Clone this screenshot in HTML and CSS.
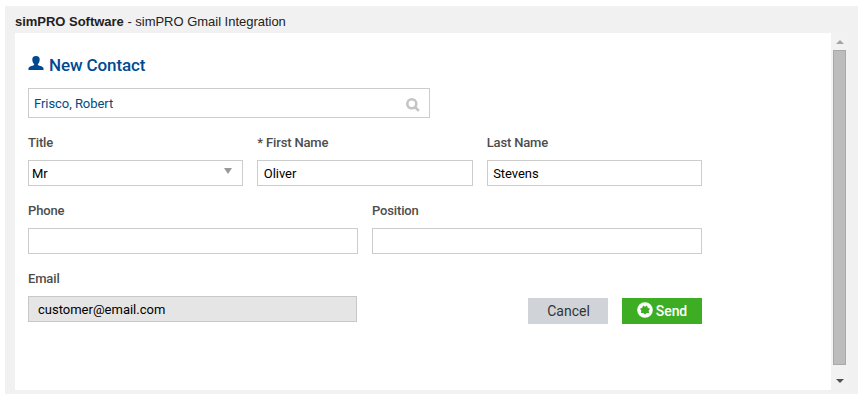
FILE: index.html
```html
<!DOCTYPE html>
<html lang="en">
<head>
<meta charset="utf-8">
<title>simPRO Gmail Integration</title>
<link rel="stylesheet" href="styles.css">
</head>
<body>
<main class="gadget">
  <header class="gadget-title"><span><b>simPRO Software</b> - simPRO Gmail Integration</span></header>
  <div class="viewport">
    <form class="contact">
      <h1 class="heading">
        <svg class="user" viewBox="0 0 16 14"><path d="M8 0C5.4 0 4.1 1.4 4.3 3.8C4.4 5.7 5 7 6.1 8V9C4.5 10 1.8 10.2.8 11.4Q.4 12 .4 14H15.6Q15.6 12 15.2 11.4C14.2 10.2 11.5 10 9.9 9V8C11 7 11.6 5.7 11.7 3.8C11.9 1.4 10.6 0 8 0Z"/></svg>
        <span>New Contact</span>
      </h1>
      <div class="box search"><span>Frisco, Robert</span>
        <svg class="glass" viewBox="0 0 14 14"><circle cx="5.8" cy="5.8" r="4.5"/><path d="M9 9L12.8 12.8"/></svg>
      </div>
      <div class="row three">
        <div class="field"><label>Title</label><div class="box select"><span>Mr</span><svg class="caret" viewBox="0 0 8 6"><path d="M0 0H8L4 6Z"/></svg></div></div>
        <div class="field"><label>* First Name</label><div class="box">Oliver</div></div>
        <div class="field"><label>Last Name</label><div class="box">Stevens</div></div>
      </div>
      <div class="row two">
        <div class="field"><label>Phone</label><div class="box"></div></div>
        <div class="field"><label>Position</label><div class="box"></div></div>
      </div>
      <div class="row last">
        <div class="field email"><label>Email</label><div class="box disabled">customer@email.com</div></div>
        <div class="actions">
          <div class="button cancel">Cancel</div>
          <div class="button send">
            <svg class="badge" viewBox="0 0 16 16"><circle class="disc" cx="8" cy="8" r="7.8"/><path class="gear" d="M8 4.7L10 3.5L10.7 5.8L13 6.7L11.7 8.5L12 10.9L9.7 11L8 12.5L6.3 11L4 10.9L4.3 8.5L3 6.7L5.3 5.8L6 3.5Z"/></svg>
            <span>Send</span>
          </div>
        </div>
      </div>
    </form>
    <div class="scrollbar">
      <svg class="arrow up" viewBox="0 0 8 4"><path d="M0 4L4 0L8 4Z"/></svg>
      <div class="thumb"></div>
      <svg class="arrow down" viewBox="0 0 8 4"><path d="M0 0H8L4 4Z"/></svg>
    </div>
  </div>
</main>
</body>
</html>
```
FILE: styles.css
```css
* { box-sizing: border-box; }
body { margin: 0; background: #fff; font: 13px/15px Roboto, sans-serif; color: #000; }
svg { display: block; flex: none; }
.gadget { width: 853px; height: 388px; margin: 6px 0 0 5px; padding: 0 10px 4px; background: #f1f1f1; }
.gadget-title { height: 27px; padding-top: 8px; font: 13px/15px "Liberation Sans", Arial, sans-serif; letter-spacing: -0.02px; color: #222; white-space: nowrap; }
.viewport { display: flex; width: 833px; height: 357px; background: #fff; }
.contact { width: 816px; padding: 22px 129px 0 13px; }
.heading { display: flex; gap: 5px; margin: 0; height: 33px; font-size: 17px; line-height: 21px; font-weight: 500; letter-spacing: -0.12px; color: #004990; }
.user { width: 16px; height: 14px; margin-top: 1px; fill: #004990; }
.box { display: flex; align-items: center; height: 26px; padding: 1px 6px 0 5.5px; border: 1px solid #ccc; background: #fff; letter-spacing: -0.05px; }
.search { justify-content: space-between; width: 402px; height: 30px; padding: 1px 9px 0 5px; color: #004b85; }
.glass { width: 14px; height: 14px; margin-top: 2px; fill: none; stroke: #c4c4c4; stroke-width: 2.6; }
.row { display: grid; column-gap: 14px; height: 68px; }
.three { grid-template-columns: repeat(3, 1fr); margin-top: 17px; }
.two { grid-template-columns: 1fr 1fr; }
.last { grid-template-columns: 329px 174px; justify-content: space-between; }
label { display: block; height: 25px; line-height: 16px; font-weight: 500; letter-spacing: -0.15px; color: #4d4d4d; }
.select { justify-content: space-between; padding: 1px 10px 0 3px; }
.caret { width: 8px; height: 6px; margin-bottom: 5px; fill: #999; }
.disabled { padding-left: 9px; background: #e5e5e5; border-color: #c8c8c8; letter-spacing: 0; }
.actions { display: flex; gap: 14px; padding-top: 27px; }
.button { display: flex; align-items: center; justify-content: center; width: 80px; height: 26px; padding-top: 1px; font-size: 14px; color: #333; }
.cancel { padding-left: 1px; background: #d0d4d8; }
.send { gap: 3px; background: #3dae23; color: #fff; font-weight: 500; letter-spacing: -0.1px; }
.badge { width: 16px; height: 16px; margin-top: -4px; }
.disc { fill: #fff; }
.gear { fill: #3dae23; }
.scrollbar { display: flex; flex-direction: column; align-items: center; width: 17px; background: #f2f2f2; }
.arrow { width: 8px; height: 4px; }
.up { margin-top: 7px; fill: #a3a3a3; }
.down { margin-top: 14px; fill: #505050; }
.thumb { width: 13px; height: 315px; margin-top: 6px; background: #bcbcbc; border: 1px solid #a8a8a8; }
```
